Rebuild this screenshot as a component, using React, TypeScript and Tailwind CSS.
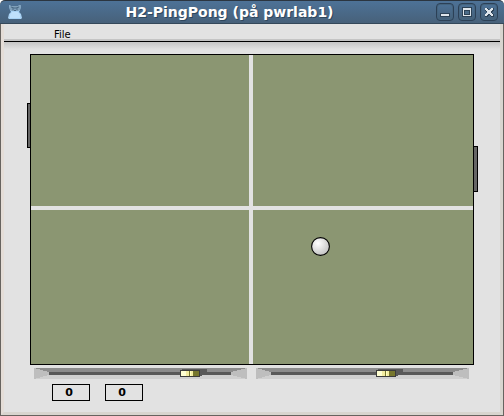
import type { ReactNode } from "react";

function WindowButton({ label, children }: { label: string; children: ReactNode }) {
  return (
    <button
      type="button"
      aria-label={label}
      className="flex h-[18px] w-[18px] items-center justify-center rounded-[4px] border border-[#2c4056] bg-linear-to-b from-[#4c7196] to-[#456078] shadow-[inset_0_0_0_1px_#44647f]"
    >
      <svg width="16" height="16" viewBox="0 0 16 16" shapeRendering="crispEdges" aria-hidden="true">
        {children}
      </svg>
    </button>
  );
}

function MascotIcon() {
  return (
    <svg width="16" height="16" viewBox="0 0 16 16" aria-hidden="true">
      <path d="M2 1l2 1h7l2-1 1 1-1 4-1 2 2 2 1 4-1 1H2l-1-1 1-4 2-2-1-2-1-4z" fill="#a9d3f5" />
      <path d="M2 1l2 1h7l2-1 1 1-1 4-2 1H5L3 6z" fill="#7f9fb9" />
      <path d="M4 3l3 1h2l3-1M5 5h2M9 5h2M7 6.500h2" fill="none" stroke="#3d5c76" strokeWidth="0.8" />
      <path d="M5 8h6l2 3v3H3v-3z" fill="#bfe0fb" />
    </svg>
  );
}

function TitleBar() {
  return (
    <div className="bg-white">
      <header className="flex h-6 items-center rounded-t-[5px] border-t border-b border-t-[#2b3540] border-b-[#34485a] bg-linear-to-b from-[#4d7297] to-[#47617a] pr-[6px] pl-[7px]">
        <MascotIcon />
        <h1 className="flex-1 text-center font-['DejaVu_Sans',sans-serif] text-[14px] leading-4 font-bold whitespace-nowrap text-white [text-shadow:1px_1px_0_#2f475d]">
          H2-PingPong (på pwrlab1)
        </h1>
        <div className="flex gap-1">
          <WindowButton label="Minimize">
            <path d="M3 9h10v4H3z" fill="#2c4256" />
            <path d="M4 10h8v2H4z" fill="#dfe6ec" />
          </WindowButton>
          <WindowButton label="Maximize">
            <path d="M3 3h10v10H3z" fill="#2c4256" />
            <path d="M4 4h8v8H4z" fill="#dfe6ec" />
            <path d="M5 6h6v5H5z" fill="#2c4256" />
            <path d="M6 7h4v3H6z" fill="#4a6b88" />
          </WindowButton>
          <WindowButton label="Close">
            <path
              d="M4 4h2v1h1v1h2V5h1V4h2v2h-1v1h-1v2h1v1h1v2h-2v-1H9v-1H7v1H6v1H4v-2h1V9h1V7H5V6H4z"
              fill="#dfe6ec"
              stroke="#2c4256"
              strokeWidth="1"
              paintOrder="stroke"
            />
          </WindowButton>
        </div>
      </header>
    </div>
  );
}

function Board() {
  return (
    <section
      aria-label="Table"
      className="relative grid aspect-[444/311] w-full grid-cols-[218fr_220fr] grid-rows-[151fr_154fr] gap-1 border border-black bg-[#e2e2e2]"
    >
      <div className="bg-[#8b9672]" />
      <div className="bg-[#8b9672]" />
      <div className="bg-[#8b9672]" />
      <div className="bg-[#8b9672]" />
      <div className="absolute top-[48px] -left-1 h-[45px] w-1 border border-black bg-[#666]" />
      <div className="absolute top-[91px] -right-[5px] h-[46px] w-[5px] border border-black bg-[#666]" />
      <svg className="absolute top-[182px] left-[280px]" width="19" height="19" viewBox="0 0 19 19" aria-hidden="true">
        <defs>
          <radialGradient id="ball" cx="0.36" cy="0.32" r="0.7">
            <stop offset="0" stopColor="#fff" />
            <stop offset="1" stopColor="#c4c4c4" />
          </radialGradient>
        </defs>
        <circle cx="9.5" cy="9.5" r="8.9" fill="url(#ball)" stroke="#000" strokeWidth="1.1" />
      </svg>
    </section>
  );
}

function SpeedSlider({ label, value }: { label: string; value: number }) {
  return (
    <div className="grid flex-1">
      <div className="col-start-1 row-start-1 flex h-[11px]">
        <svg width="15" height="11" viewBox="0 0 15 11" shapeRendering="crispEdges" aria-hidden="true">
          <path d="M0 0h15v11H0z" fill="#bebebe" />
          <path d="M0 0h15v4z" fill="#8c8c8c" />
          <path d="M0 11h15V7z" fill="#d0d0d0" />
        </svg>
        <div className="flex flex-1 flex-col">
          <div className="h-1 bg-[#8c8c8c]" />
          <div className="h-[3px] bg-[#595959]" />
          <div className="h-1 bg-[#d0d0d0]" />
        </div>
        <svg width="16" height="11" viewBox="0 0 16 11" shapeRendering="crispEdges" aria-hidden="true">
          <path d="M0 0h16v11H0z" fill="#bebebe" />
          <path d="M0 0h16L0 4z" fill="#8c8c8c" />
          <path d="M0 11h16L0 7z" fill="#d0d0d0" />
        </svg>
      </div>
      <input
        type="range"
        aria-label={label}
        min={0}
        max={1000}
        defaultValue={value}
        className="col-start-1 row-start-1 h-[11px] w-full appearance-none bg-transparent [&::-webkit-slider-thumb]:h-[7px] [&::-webkit-slider-thumb]:w-5 [&::-webkit-slider-thumb]:appearance-none [&::-webkit-slider-thumb]:border [&::-webkit-slider-thumb]:border-[#3c3c3c] [&::-webkit-slider-thumb]:bg-[linear-gradient(90deg,#ffffd2_0_5px,#f3eda2_5px_8px,#77772d_8px_9px,#ffffc0_9px_10px,#f3eda2_10px_12px,#77772d_12px)] [&::-webkit-slider-thumb]:shadow-[9px_-3px_0_-2px_#595959,2px_-1px_0_0_#595959]"
      />
    </div>
  );
}

function Score({ label, value }: { label: string; value: number }) {
  return (
    <output
      aria-label={label}
      className="flex h-[17px] w-[38px] items-center justify-center border border-black pr-1 font-['DejaVu_Sans',sans-serif] text-[11px] leading-[15px] font-bold text-black"
    >
      {value}
    </output>
  );
}

export default function App() {
  return (
    <div className="flex min-h-screen flex-col bg-[#e2e2e2]">
      <TitleBar />
      <div className="flex flex-1 flex-col border-x border-b border-[#67635f]">
        <div className="flex flex-1 flex-col border-x-[3px] border-b-[3px] border-[#d8d5cf] border-l-[#e4ddd7]">
          <nav className="flex h-[18px] items-end border-b border-black pl-[46px] shadow-[inset_0_-2px_0_#c4c4c4]">
            <button type="button" className="px-1 font-['DejaVu_Sans',sans-serif] text-[10px] leading-3 text-black">
              File
            </button>
          </nav>
          <div className="h-3 bg-linear-to-b from-[#c6c6c6] to-[#e2e2e2] to-60%" />
          <main className="px-[26px]">
            <Board />
            <div className="flex gap-[9px] pt-[3px] pr-[5px] pl-1">
              <SpeedSlider label="Left speed" value={756} />
              <SpeedSlider label="Right speed" value={622} />
            </div>
            <div className="flex gap-[15px] pt-[5px] pb-2 pl-[22px]">
              <Score label="Left score" value={0} />
              <Score label="Right score" value={0} />
            </div>
          </main>
        </div>
      </div>
    </div>
  );
}
